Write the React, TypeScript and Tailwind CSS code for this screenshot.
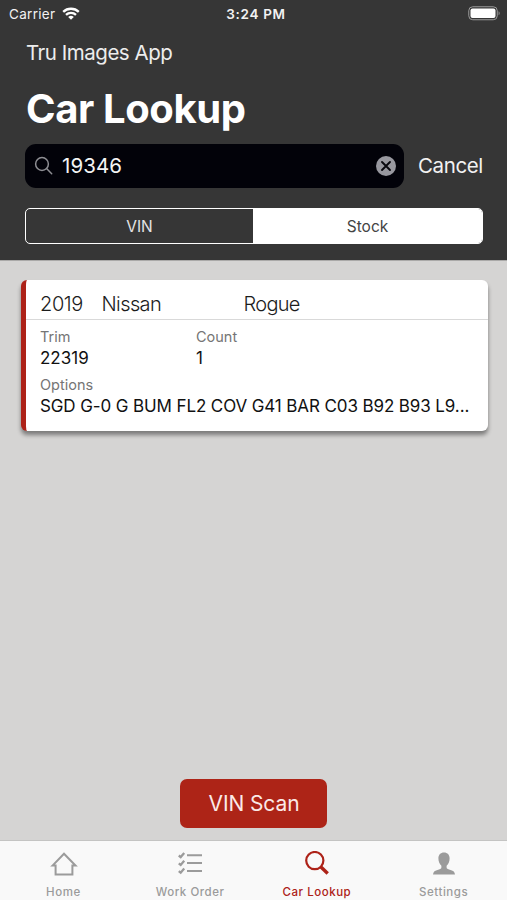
import type { ReactNode } from "react";

function StatusBar() {
  return (
    <div className="grid h-7 grid-cols-[1fr_auto_1fr] items-center pl-[9px] pr-[6px] text-[13.5px] leading-7 text-[#f2f2f2]">
      <div className="flex items-center gap-[7px]">
        <span className="tracking-[0.3px]">Carrier</span>
        <svg className="-mt-[2px]" width="18" height="13" viewBox="0 0 18 13" fill="none" stroke="#fff" strokeWidth="2.3">
          <path d="M1.2 4.9a11.2 11.2 0 0 1 15.6 0" />
          <path d="M4 7.8a7.2 7.2 0 0 1 10 0" />
          <path d="M6.2 10a4 4 0 0 1 5.6 0L9 12.8Z" fill="#fff" stroke="none" />
        </svg>
      </div>
      <span className="pl-[2px] font-semibold tracking-[0.7px]">3:24 PM</span>
      <svg className="-mt-[2px] justify-self-end" width="33" height="15" viewBox="0 0 33 15">
        <rect x="0.75" y="0.75" width="28.5" height="13" rx="4" fill="none" stroke="#9a9a9a" />
        <rect x="2.5" y="2.5" width="25" height="9.5" rx="2" fill="#fff" />
        <path d="M30.6 5.2c1.4.5 1.4 3.6 0 4.1Z" fill="#9a9a9a" />
      </svg>
    </div>
  );
}

function SearchRow() {
  return (
    <div className="flex h-[44px] items-center">
      <div className="flex h-[44px] w-[379px] items-center rounded-[11px] bg-[#020209] pl-[9px] pr-[8px]">
        <svg width="20" height="20" viewBox="0 0 20 20" fill="none" stroke="#8e8e93" strokeWidth="1.5" strokeLinecap="round">
          <circle cx="8" cy="8" r="6.4" />
          <path d="m12.8 12.8 4.9 4.9" />
        </svg>
        <span className="ml-[8px] flex-1 text-[20.5px] tracking-[0.1px] text-[#f4f4f4]">19346</span>
        <svg width="20" height="20" viewBox="0 0 20 20">
          <circle cx="10" cy="10" r="10" fill="#98989f" />
          <path d="m6 6 8 8m0-8-8 8" stroke="#08080e" strokeWidth="1.9" strokeLinecap="round" />
        </svg>
      </div>
      <span className="ml-[14px] whitespace-nowrap text-[20.5px] tracking-[-0.4px] text-[#f2f2f2]">Cancel</span>
    </div>
  );
}

function Tab({ icon, label, active }: { icon: ReactNode; label: string; active?: boolean }) {
  return (
    <div className={active ? "flex flex-col items-center text-[#ad2218]" : "flex flex-col items-center text-[#9b9b9b]"}>
      <div className="flex h-[43px] items-center pt-[2px]">{icon}</div>
      <span className="whitespace-nowrap text-[11.5px] font-medium leading-4 tracking-[0.55px]">{label}</span>
    </div>
  );
}

const homeIcon = (
  <svg className="ml-[2px]" width="28" height="26" viewBox="0 0 28 26" fill="none" stroke="currentColor" strokeWidth="2">
    <path d="M2.5 14.6 14 2.8l11.5 11.8h-3.1v8.8H5.6v-8.8Z" />
  </svg>
);

const listIcon = (
  <svg width="26" height="26" viewBox="0 0 26 26" fill="none" stroke="currentColor" strokeWidth="2">
    <path d="M10 4.3h15M10 12.1h15M10 19.9h15" />
    <path strokeWidth="2.3" d="m1.8 4.500 1.900 1.600 3.500-4.100M1.800 12.300l1.900 1.600 3.500-4.100M1.800 20.100l1.900 1.600 3.500-4.100" />
  </svg>
);

const lookupIcon = (
  <svg width="26" height="26" viewBox="0 0 26 26" fill="none" stroke="currentColor">
    <circle cx="10.8" cy="9.6" r="8.6" strokeWidth="2.2" />
    <path d="m16.7 15.700 7 6.800" strokeWidth="3.4" />
  </svg>
);

const personIcon = (
  <svg width="24" height="26" viewBox="0 0 24 26" fill="currentColor">
    <path d="M12 1.500c-3.500 0-5.600 2.400-5.600 5.800 0 3.200 1 5.800 3 7.400v1.500c0 1.400-1 1.900-3.200 2.500C3 19.600 1.200 20.500 1 23.600h22c-.2-3.100-2-4-5.200-4.900-2.200-.6-3.200-1.100-3.200-2.500v-1.500c2-1.600 3-4.200 3-7.400 0-3.400-2.100-5.800-5.600-5.800Z" />
  </svg>
);

export default function App() {
  return (
    <div className="flex h-[900px] w-[507px] flex-col overflow-hidden bg-[#d5d4d3] font-['Inter','Liberation_Sans',sans-serif]">
      <header className="h-[260px] bg-[#363636] text-white">
        <StatusBar />
        <div className="flex flex-col pl-[25px] pr-[24px]">
          <div className="mt-[9px] h-8 pl-px text-[20.5px] leading-8 tracking-[-0.48px] text-[#ededed]">Tru Images App</div>
          <h1 className="mt-[16px] h-12 pl-px text-[40px] font-bold leading-[48px] tracking-[-0.4px]">Car Lookup</h1>
          <div className="mt-[11px]">
            <SearchRow />
          </div>
          <div className="mt-[20px] flex h-[36px] overflow-hidden rounded-[5px] border-[1.5px] border-white text-[15.5px]">
            <div className="flex w-[227px] items-center justify-center pt-px text-[#e4e4e4]">VIN</div>
            <div className="flex flex-1 items-center justify-center bg-white pt-px text-[#444]">Stock</div>
          </div>
        </div>
      </header>

      <main className="flex flex-1 flex-col items-center justify-between border-t border-[#aaa9a8] pb-[12px] pt-[18.5px]">
        <section className="ml-[20.5px] h-[151px] w-[467px] self-start overflow-hidden rounded-[6px] border-l-[5px] border-[#ad2218] bg-white shadow-[0_4px_4px_rgba(0,0,0,0.42)]">
          <div className="flex h-[40px] items-center border-b border-[#d9d9d9] pl-[14.5px] pt-[9px] text-[20px] font-light text-[#1c1c1c]">
            <span className="w-[61.5px] tracking-[-0.4px]">2019</span>
            <span className="w-[142px] tracking-[-0.6px]">Nissan</span>
            <span className="tracking-[-0.7px]">Rogue</span>
          </div>
          <div className="grid grid-cols-[156px_1fr] pl-[14.5px] pt-[7px]">
            <div className="h-5 text-[14.5px] leading-5 text-[#757575]">Trim</div>
            <div className="h-5 text-[14.5px] leading-5 text-[#757575]">Count</div>
            <div className="h-6 text-[17px] leading-[23px] text-[#111]">22319</div>
            <div className="h-6 text-[17px] leading-[23px] text-[#111]">1</div>
          </div>
          <div className="pl-[14.5px] pt-[4px]">
            <div className="h-5 text-[14.5px] leading-5 text-[#757575]">Options</div>
            <div className="h-6 whitespace-nowrap text-[17px] leading-[23px] tracking-[-0.11px] text-[#111]">SGD G-0 G BUM FL2 COV G41 BAR C03 B92 B93 L9...</div>
          </div>
        </section>
        <button className="h-[49px] w-[147px] rounded-[7px] bg-[#ad2417] pl-px text-[21px] tracking-[-0.1px] text-[#fbe9e7]">VIN Scan</button>
      </main>

      <nav className="grid h-[60px] grid-cols-4 border-t border-[#c4c4c3] bg-[#f9f9f9]">
        <Tab icon={homeIcon} label="Home" />
        <Tab icon={listIcon} label="Work Order" />
        <Tab icon={lookupIcon} label="Car Lookup" active />
        <Tab icon={personIcon} label="Settings" />
      </nav>
    </div>
  );
}
